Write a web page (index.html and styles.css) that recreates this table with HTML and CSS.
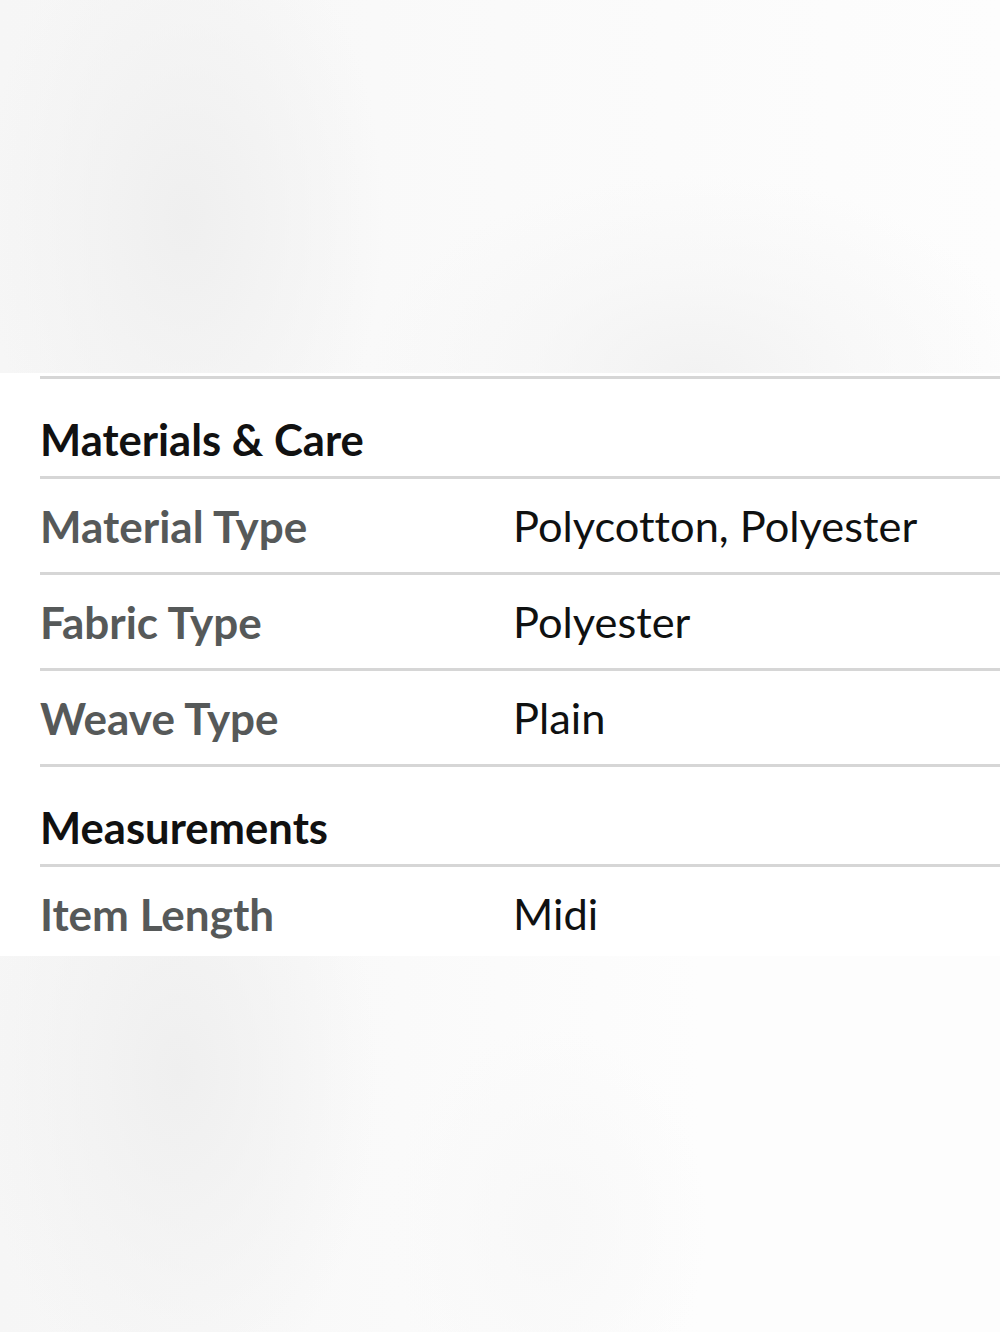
FILE: index.html
```html
<!DOCTYPE html>
<html lang="en">
<head>
<meta charset="utf-8">
<title>Materials &amp; Care</title>
<link rel="stylesheet" href="styles.css">
</head>
<body>
<div class="backdrop backdrop-top"></div>
<section class="panel">
  <div class="section-title">Materials &amp; Care</div>
  <div class="row"><div class="label">Material Type</div><div class="value">Polycotton, Polyester</div></div>
  <div class="row"><div class="label">Fabric Type</div><div class="value">Polyester</div></div>
  <div class="row"><div class="label">Weave Type</div><div class="value">Plain</div></div>
  <div class="section-title">Measurements</div>
  <div class="row"><div class="label">Item Length</div><div class="value">Midi</div></div>
</section>
<div class="backdrop backdrop-bottom"></div>
</body>
</html>
```
FILE: styles.css
```css
html, body {
  margin: 0;
  padding: 0;
  background: #ffffff;
}
body {
  width: 1000px;
  height: 1332px;
  overflow: hidden;
  font-family: Lato, "Noto Sans", "Liberation Sans", sans-serif;
  font-variant-ligatures: none;
}
.backdrop {
  background-color: #fdfdfd;
}
.backdrop-top {
  height: 373px;
  background-image:
    radial-gradient(ellipse 200px 330px at 185px 220px, #efefef 0%, rgba(240,240,240,0.6) 45%, rgba(250,250,250,0) 100%),
    radial-gradient(ellipse 330px 200px at 695px 375px, #f2f2f2 0%, rgba(244,244,244,0.5) 50%, rgba(250,250,250,0) 100%),
    linear-gradient(90deg, #f6f6f6 0%, #fafafa 50%, #fdfdfd 100%);
}
.backdrop-bottom {
  height: 376px;
  background-image:
    radial-gradient(ellipse 200px 340px at 178px 116px, #efefef 0%, rgba(240,240,240,0.6) 45%, rgba(250,250,250,0) 100%),
    radial-gradient(ellipse 160px 200px at 548px 270px, #f8f8f8 0%, rgba(250,250,250,0) 100%),
    linear-gradient(90deg, #f6f6f6 0%, #fafafa 40%, #fdfdfd 70%, #fdfdfd 100%);
}
.panel {
  background: #ffffff;
  padding: 3px 0 0 40px;
  height: 580px;
  overflow: hidden;
}
.section-title {
  border-top: 3px solid #d6d6d6;
  height: 73px;
  padding-top: 24px;
  display: flex;
  align-items: center;
  font-size: 43.6px;
  font-weight: 700;
  color: #111111;
  line-height: 1;
}
.row {
  border-top: 3px solid #d6d6d6;
  height: 93px;
  display: flex;
  align-items: center;
  font-size: 44px;
  line-height: 1;
}
.label {
  width: 473px;
  flex: none;
  font-weight: 700;
  color: #565959;
}
.value {
  color: #0f1111;
  font-weight: 400;
  font-size: 43.4px;
}
```
